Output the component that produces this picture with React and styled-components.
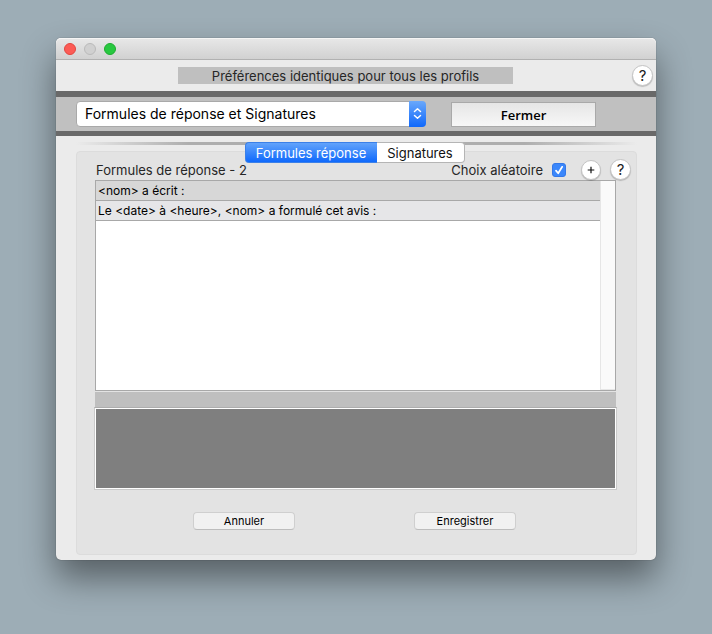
import { useState } from "react";
import styled, { createGlobalStyle } from "styled-components";

const GlobalStyle = createGlobalStyle`
  * {
    box-sizing: border-box;
  }
  body {
    margin: 0;
    background: #9dadb6;
    font-family: Inter, "Liberation Sans", sans-serif;
    color: #262626;
  }
  button, select, textarea {
    font-family: inherit;
    margin: 0;
  }
`

const Desktop = styled.div`
  min-height: 100vh;
  padding: 38px 56px 74px;
  background: #9dadb6;
`

const Window = styled.main`
  background: #ebebeb;
  border-radius: 5px;
  box-shadow: 0 0 1px rgba(0, 0, 0, 0.6), 0 18px 34px rgba(0, 0, 0, 0.45);
  padding-bottom: 5px;
`

const TitleBar = styled.header`
  display: flex;
  align-items: center;
  gap: 8px;
  height: 22px;
  padding: 0 8px;
  border-radius: 5px 5px 0 0;
  border-bottom: 1px solid #b1b1b1;
  background: linear-gradient(#e8e8e8, #d1d1d1);
  box-shadow: inset 0 1px 0 #f5f5f5;
`

const Light = styled.button`
  width: 12px;
  height: 12px;
  padding: 0;
  border-radius: 50%;
  border: 1px solid ${(props) => props.$edge};
  background: ${(props) => props.$fill};
`

const Notice = styled.div`
  display: flex;
  align-items: center;
  height: 31px;
  padding: 0 3px 0 122px;
`

const NoticeText = styled.p`
  flex: 1;
  margin: 0 119px 0 0;
  padding-top: 1px;
  background: #bfbfbf;
  font-size: 13px;
  line-height: 16px;
  text-align: center;
`

const RoundButton = styled.button`
  display: grid;
  place-items: center;
  flex: none;
  width: ${(props) => props.$size}px;
  height: ${(props) => props.$size}px;
  padding: 0;
  border: 1px solid #c4c4c4;
  border-radius: 50%;
  background: #fff;
  color: #222;
  font-size: 15px;
  line-height: 17px;
  box-shadow: 0 1px 1px rgba(0, 0, 0, 0.2);
`

const Toolbar = styled.div`
  display: flex;
  align-items: center;
  gap: 25px;
  height: 45px;
  padding: 0 60px 0 20px;
  border-top: 6px solid #696969;
  border-bottom: 5px solid #696969;
  background: #c0c0c0;
`

const SelectBox = styled.div`
  flex: 1;
  display: grid;
  grid-template-columns: 1fr 17px;
  height: 26px;
`

const Select = styled.select`
  grid-area: 1 / 1 / 2 / 3;
  appearance: none;
  width: 100%;
  padding: 0 24px 2px 8px;
  border: 1px solid #a9a9a9;
  border-radius: 4px;
  background: #fff;
  color: #000;
  font-size: 14px;
`

const Arrows = styled.span`
  grid-area: 1 / 2 / 2 / 3;
  display: grid;
  place-items: center;
  border-radius: 0 4px 4px 0;
  background: linear-gradient(#6aa8fb, #0f68fb);
  pointer-events: none;
`

const CloseButton = styled.button`
  width: 145px;
  height: 25px;
  padding: 2px 0 0;
  border: 1px solid #a9a9a9;
  background: linear-gradient(#e6e6e6, #f7f7f7);
  color: #000;
  && {
    font-family: "Open Sans", "Noto Sans", sans-serif;
  }
  font-size: 13px;
  font-weight: 600;
`

const Content = styled.div`
  padding: 6px 19px 0 20px;
`

const Tabs = styled.div`
  position: relative;
  display: flex;
  justify-content: center;
  height: 21px;
  margin-bottom: -12px;
  padding-right: 4px;
  background: linear-gradient(90deg, transparent, #aeaeae 20%, #aeaeae 80%, transparent) 0 0 / 100% 3px no-repeat;
`

const Tab = styled.button`
  width: ${(props) => props.$width}px;
  padding: 0;
  border: 1px solid ${(props) => props.$active ? "#3b80e8" : "#b5b5b5"};
  border-width: ${(props) => props.$active ? "1px 0 1px 1px" : "1px 1px 1px 0"};
  border-radius: ${(props) => props.$active ? "4px 0 0 4px" : "0 4px 4px 0"};
  background: ${(props) => props.$active ? "linear-gradient(#62a3fb, #0f69fc)" : "#fff"};
  color: ${(props) => props.$active ? "#fff" : "#111"};
  font-size: 13px;
  line-height: 18px;
`

const Panel = styled.section`
  padding: 7px 20px 24px 18px;
  border: 1px solid #dcdcdc;
  border-radius: 4px;
  background: #e3e3e3;
`

const PanelHead = styled.div`
  display: flex;
  align-items: center;
  height: 21px;
  margin-right: -15px;
`

const PanelTitle = styled.h1`
  flex: 1;
  margin: 0;
  padding-left: 1px;
  font-size: 13px;
  font-weight: 400;
  line-height: 18px;
`

const CheckLabel = styled.label`
  display: flex;
  align-items: center;
  gap: 9px;
  margin-right: 15px;
  font-size: 13px;
  line-height: 18px;
`

const CheckBox = styled.span`
  display: grid;
  width: 14px;
  height: 14px;

  input, svg {
    grid-area: 1 / 1;
  }
  input {
    appearance: none;
    width: 14px;
    height: 14px;
    margin: 0;
    border: 1px solid #3478e8;
    border-radius: 3px;
    background: #fff;
  }
  input:checked {
    background: #3b87fb;
  }
  svg {
    pointer-events: none;
  }
`

const HeadButtons = styled.div`
  display: flex;
  align-items: center;
  gap: 9px;
`

const ListBox = styled.div`
  display: flex;
  align-items: flex-start;
  height: 211px;
  border: 1px solid #a8a8a8;
  background: #fff;
`

const List = styled.table`
  flex: 1;
  border-spacing: 0;
  font-size: 12px;
  line-height: 19px;
  color: #000;
`

const Row = styled.tr`
  background: ${(props) => props.$selected ? "#d7d7d7" : "#e6e6e8"};

  td {
    height: 20px;
    padding: 0 2px;
    border-bottom: 1px solid #a8a8a8;
  }
`

const Gutter = styled.div`
  align-self: stretch;
  width: 15px;
  border-left: 1px solid #e6e6e6;
  border-bottom: 1px solid #e6e6e6;
  background: #fafafa;
`

const Strip = styled.div`
  height: 15px;
  margin-top: 1px;
  background: #bfbfbf;
`

const Editor = styled.textarea`
  display: block;
  width: calc(100% + 2px);
  height: 83px;
  margin: 0 -1px;
  border: 1px solid #cacaca;
  border-top-color: #adadad;
  outline: 1px solid #fff;
  outline-offset: -2px;
  background: #7f7f7f;
  color: #fff;
  resize: none;
`

const Actions = styled.div`
  display: flex;
  justify-content: space-between;
  padding: 22px 100px 0 98px;
`

const ActionButton = styled.button`
  width: 102px;
  height: 18px;
  padding: 0;
  border: 1px solid #cfcfcf;
  border-bottom-color: #bdbdbd;
  border-radius: 4px;
  background: #f1f1f1;
  color: #000;
  font-size: 11px;
  line-height: 16px;
`

const formules = [
  "<nom> a écrit :",
  "Le <date> à <heure>, <nom> a formulé cet avis :",
]

function App() {
  const [random, setRandom] = useState(true)

  return (
    <Desktop>
      <GlobalStyle />
      <Window>
        <TitleBar>
          <Light aria-label="Fermer la fenêtre" $fill="#fc5b55" $edge="#e2463f" />
          <Light aria-label="Réduire" $fill="#d0d0d0" $edge="#bababa" disabled />
          <Light aria-label="Agrandir" $fill="#28c840" $edge="#1dac2f" />
        </TitleBar>
        <Notice>
          <NoticeText>Préférences identiques pour tous les profils</NoticeText>
          <RoundButton $size={21}>?</RoundButton>
        </Notice>
        <Toolbar>
          <SelectBox>
            <Select aria-label="Rubrique">
              <option>Formules de réponse et Signatures</option>
            </Select>
            <Arrows>
              <svg width="9" height="14" viewBox="0 0 9 14" fill="none" stroke="#fff" strokeWidth="1.5" strokeLinecap="round" strokeLinejoin="round">
                <path d="M1.5 4.5 4.5 1.8 7.5 4.5M1.5 8.5 4.5 11.2 7.5 8.5" />
              </svg>
            </Arrows>
          </SelectBox>
          <CloseButton>Fermer</CloseButton>
        </Toolbar>
        <Content>
          <Tabs>
            <Tab $active $width={132}>Formules réponse</Tab>
            <Tab $width={88}>Signatures</Tab>
          </Tabs>
          <Panel>
            <PanelHead>
              <PanelTitle>Formules de réponse - 2</PanelTitle>
              <CheckLabel>
                Choix aléatoire
                <CheckBox>
                  <input type="checkbox" checked={random} onChange={(e) => setRandom(e.target.checked)} />
                  {random && (
                    <svg width="14" height="14" viewBox="0 0 14 14" fill="none" stroke="#fff" strokeWidth="1.7" strokeLinecap="round" strokeLinejoin="round">
                      <path d="M4 7.6 6.2 10.3 10.2 3.8" />
                    </svg>
                  )}
                </CheckBox>
              </CheckLabel>
              <HeadButtons>
                <RoundButton $size={20} aria-label="Ajouter">
                  <svg width="8" height="8" viewBox="0 0 8 8" stroke="#111" strokeWidth="1.2">
                    <path d="M4 .7v6.6M.7 4h6.6" />
                  </svg>
                </RoundButton>
                <RoundButton $size={21}>?</RoundButton>
              </HeadButtons>
            </PanelHead>
            <ListBox>
              <List>
                <tbody>
                  {formules.map((text, i) => (
                    <Row key={text} $selected={i === 0}>
                      <td>{text}</td>
                    </Row>
                  ))}
                </tbody>
              </List>
              <Gutter />
            </ListBox>
            <Strip />
            <Editor aria-label="Texte de la formule" />
            <Actions>
              <ActionButton>Annuler</ActionButton>
              <ActionButton>Enregistrer</ActionButton>
            </Actions>
          </Panel>
        </Content>
      </Window>
    </Desktop>
  )
}

export default App
